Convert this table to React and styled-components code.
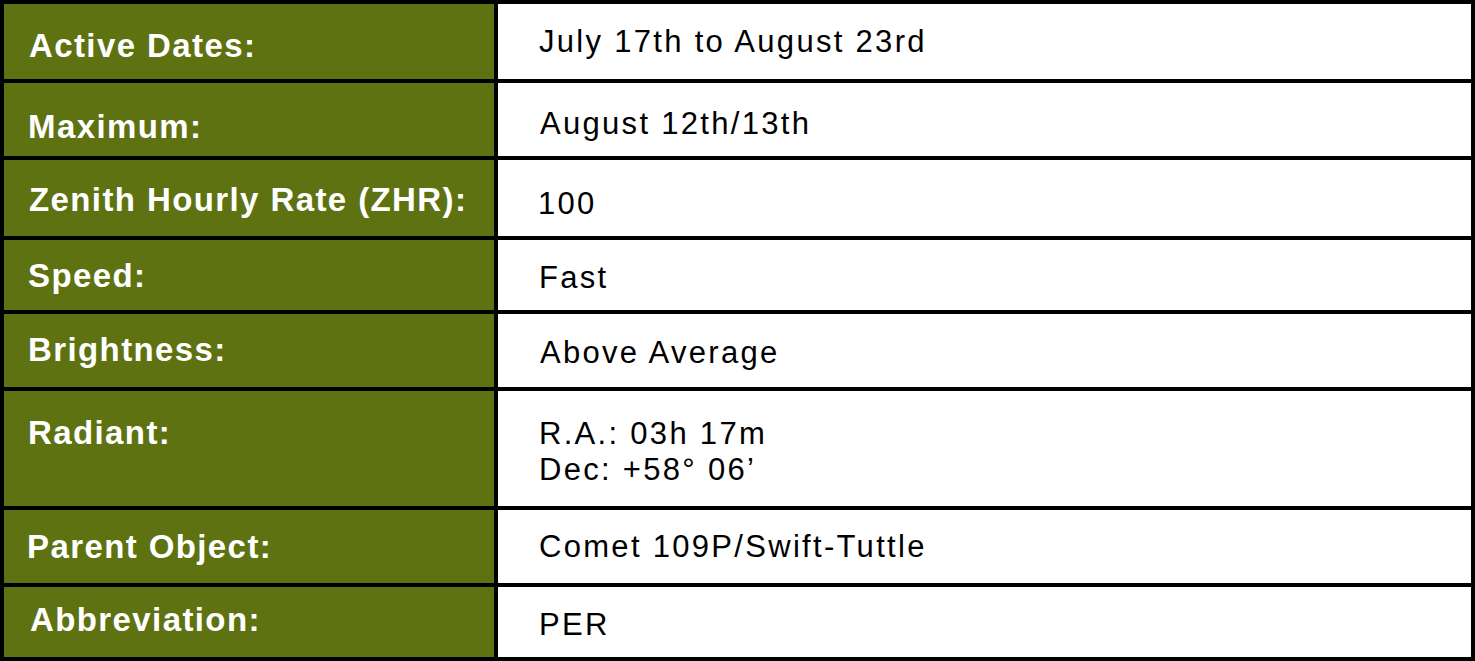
import React from "react";
import styled, { createGlobalStyle } from "styled-components";

const GlobalStyle = createGlobalStyle`
  html, body {
    margin: 0;
    padding: 0;
    background: #ffffff;
  }
  * {
    box-sizing: border-box;
  }
`;

// Black frame, the gaps between cells draw the rules
const Table = styled.div`
  width: 1475px;
  height: 661px;
  display: grid;
  grid-template-columns: 490px 973px;
  grid-template-rows: 75px 73px 76px 70px 73px 115px 73px 70px;
  gap: 4px;
  padding: 4px;
  background: #000000;
  font-family: "Liberation Sans", Arial, sans-serif;
`;

const Label = styled.div`
  background: #5e7212;
  color: #ffffff;
  font-size: 33px;
  font-weight: 700;
  line-height: 1;
  letter-spacing: 1.4px;
  white-space: nowrap;
  padding-top: ${(p) => p.$top}px;
  padding-left: ${(p) => p.$left}px;
`;

const Value = styled.div`
  background: #ffffff;
  color: #000000;
  font-size: 31px;
  line-height: 36px;
  letter-spacing: 2.3px;
  white-space: nowrap;
  padding-top: ${(p) => p.$top}px;
  padding-left: ${(p) => p.$left}px;
`;

const Line = styled.div``;

const rows = [
  { label: "Active Dates:", lx: 25, lt: 25, value: ["July 17th to August 23rd"], vx: 41, vt: 20 },
  { label: "Maximum:", lx: 24, lt: 27, value: ["August 12th/13th"], vx: 42, vt: 23 },
  { label: "Zenith Hourly Rate (ZHR):", lx: 25, lt: 23, value: ["100"], vx: 40, vt: 26 },
  { label: "Speed:", lx: 24, lt: 19, value: ["Fast"], vx: 41, vt: 20 },
  { label: "Brightness:", lx: 24, lt: 19, value: ["Above Average"], vx: 42, vt: 21 },
  { label: "Radiant:", lx: 24, lt: 25, value: ["R.A.: 03h 17m", "Dec: +58\u00b0 06\u2019"], vx: 41, vt: 25 },
  { label: "Parent Object:", lx: 23, lt: 20, value: ["Comet 109P/Swift-Tuttle"], vx: 41, vt: 19 },
  { label: "Abbreviation:", lx: 26, lt: 16, value: ["PER"], vx: 41, vt: 20 },
];

export default function App() {
  return (
    <>
      <GlobalStyle />
      <Table>
        {rows.map((row) => (
          <React.Fragment key={row.label}>
            <Label $left={row.lx} $top={row.lt}>
              {row.label}
            </Label>
            <Value $left={row.vx} $top={row.vt}>
              {row.value.map((line) => (
                <Line key={line}>{line}</Line>
              ))}
            </Value>
          </React.Fragment>
        ))}
      </Table>
    </>
  );
}
